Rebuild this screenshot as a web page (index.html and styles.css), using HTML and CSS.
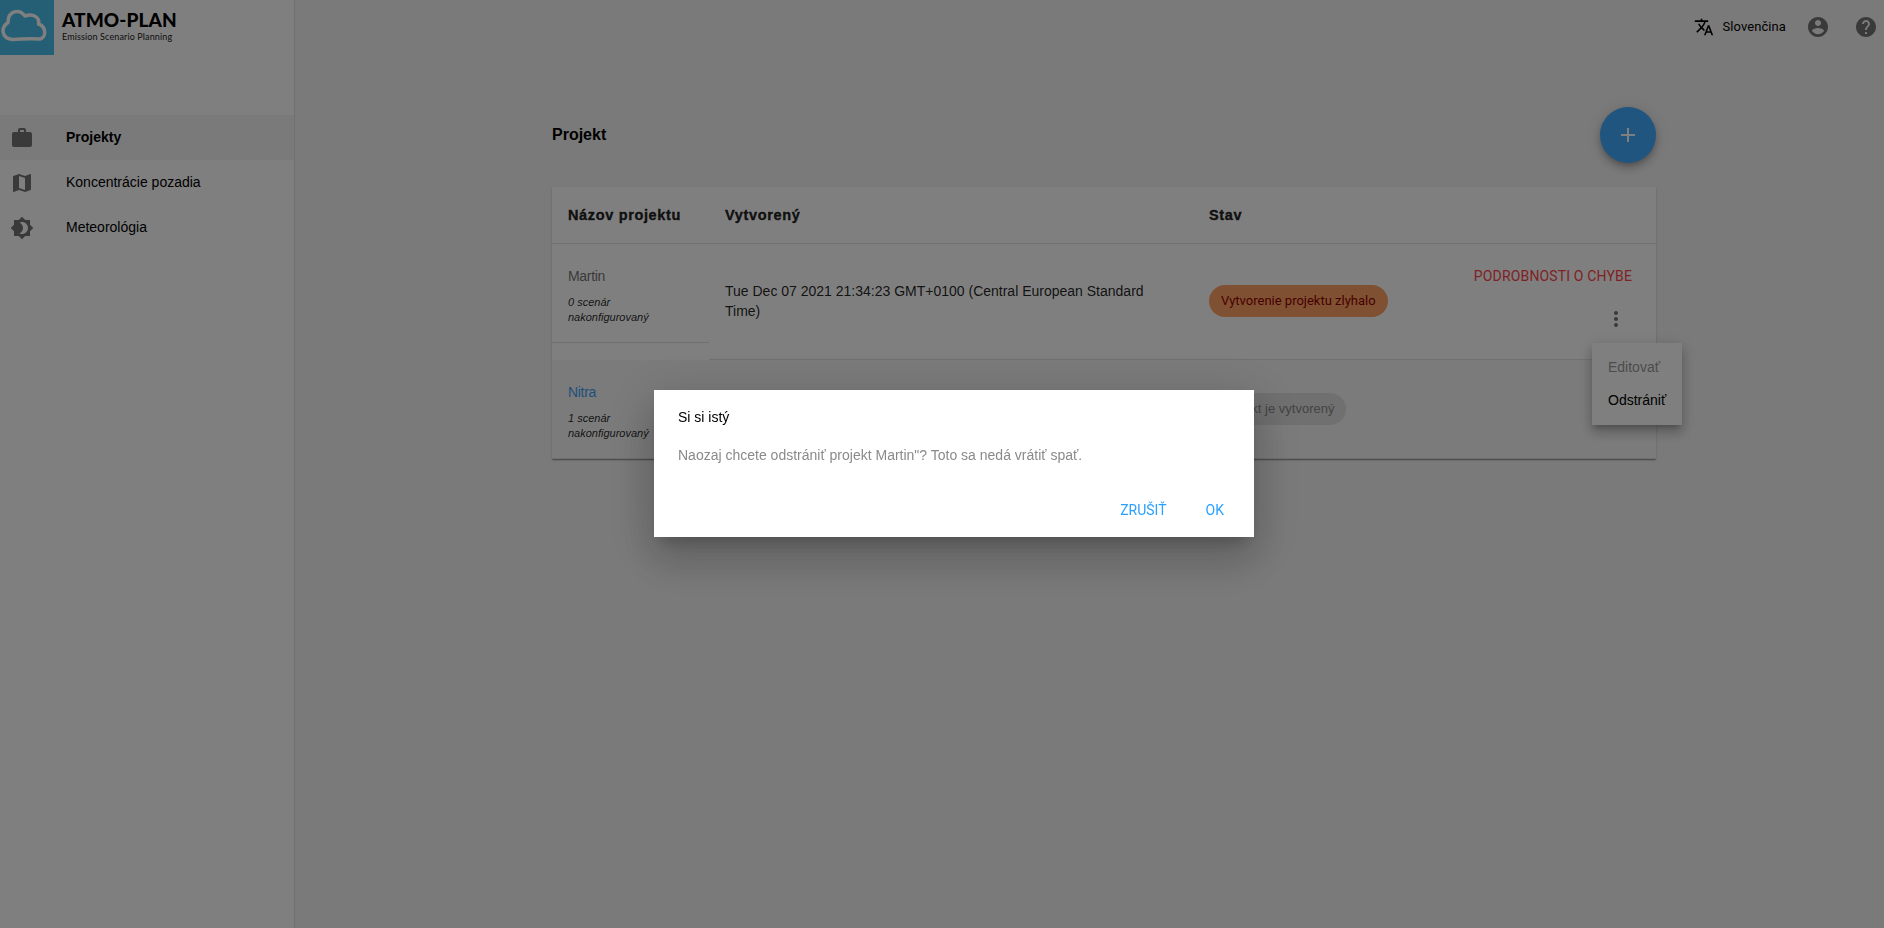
FILE: index.html
```html
<!DOCTYPE html>
<html lang="sk">
<head>
<meta charset="utf-8">
<title>ATMO-PLAN</title>
<link rel="stylesheet" href="styles.css">
</head>
<body>
<div class="app">
  <aside class="sidebar">
    <div class="brand">
      <svg class="brand-mark" viewBox="0 0 54 55"><rect width="54" height="55" fill="#48bfec"/><path d="M12 39.500C2 38.500 0 28 8 22.500C8 11 19 8 25 16C34 13 40 18 38.500 24C47 27 46 38 40 39Q26 38.500 12 39.500Z" fill="none" stroke="#fff" stroke-width="3.500" stroke-linejoin="round"/></svg>
      <div class="brand-text"><div class="brand-name">ATMO-PLAN</div><div class="brand-sub">Emission Scenario Planning</div></div>
    </div>
    <nav class="nav">
      <a class="nav-item active"><svg class="icon" viewBox="0 0 24 24"><path d="M20 6h-4V4c0-1.110-.89-2-2-2h-4c-1.110 0-2 .89-2 2v2H4c-1.110 0-2 .89-2 2v11c0 1.110.89 2 2 2h16c1.110 0 2-.89 2-2V8c0-1.110-.89-2-2-2zm-6 0h-4V4h4v2z"/></svg><span class="nav-label">Projekty</span></a>
      <a class="nav-item"><svg class="icon" viewBox="0 0 24 24"><path d="M20.500 3l-.16.03L15 5.100 9 3 3.360 4.900c-.21.07-.36.25-.36.48V20.500c0 .28.22.5.5.5l.16-.03L9 18.900l6 2.100 5.640-1.900c.21-.07.36-.25.36-.48V3.500c0-.28-.22-.5-.5-.5zM15 19l-6-2.110V5l6 2.110V19z"/></svg><span class="nav-label">Koncentrácie pozadia</span></a>
      <a class="nav-item"><svg class="icon" viewBox="0 0 24 24"><path d="M20 8.690V4h-4.690L12 .69 8.690 4H4v4.690L.69 12 4 15.310V20h4.690L12 23.310 15.310 20H20v-4.690L23.310 12 20 8.690zM12 18c-.89 0-1.740-.2-2.500-.55C11.560 16.500 13 14.420 13 12s-1.440-4.500-3.500-5.450C10.260 6.200 11.110 6 12 6c3.310 0 6 2.690 6 6s-2.690 6-6 6z"/></svg><span class="nav-label">Meteorológia</span></a>
    </nav>
  </aside>
  <main class="main">
    <header class="topbar">
      <span class="language"><svg class="lang-icon" viewBox="0 0 24 24"><path d="M12.870 15.070l-2.540-2.510.03-.03c1.740-1.940 2.980-4.170 3.710-6.530H17V4h-7V2H8v2H1v1.990h11.170C11.500 7.920 10.440 9.750 9 11.350 8.070 10.320 7.300 9.190 6.690 8h-2c.73 1.630 1.730 3.170 2.980 4.560l-5.090 5.020L4 19l5-5 3.110 3.110.76-2.040zM18.500 10h-2L12 22h2l1.120-3h4.750L21 22h2l-4.500-12zm-2.620 7l1.620-4.330L19.120 17h-3.240z"/></svg>Slovenčina</span>
      <svg class="icon" viewBox="0 0 24 24"><path d="M12 2C6.480 2 2 6.480 2 12s4.480 10 10 10 10-4.480 10-10S17.520 2 12 2zm0 3c1.660 0 3 1.340 3 3s-1.340 3-3 3-3-1.340-3-3 1.340-3 3-3zm0 14.200c-2.500 0-4.710-1.280-6-3.220.03-1.990 4-3.080 6-3.080 1.990 0 5.970 1.090 6 3.080-1.290 1.940-3.500 3.220-6 3.220z"/></svg>
      <svg class="icon" viewBox="0 0 24 24"><path d="M12 2C6.480 2 2 6.480 2 12s4.480 10 10 10 10-4.480 10-10S17.520 2 12 2zm1 17h-2v-2h2v2zm2.070-7.750l-.9.92C13.450 12.900 13 13.500 13 15h-2v-.5c0-1.100.45-2.100 1.170-2.830l1.240-1.260c.37-.36.59-.86.59-1.410 0-1.100-.9-2-2-2s-2 .9-2 2H8c0-2.210 1.790-4 4-4s4 1.790 4 4c0 .88-.36 1.680-.93 2.250z"/></svg>
    </header>
    <section class="content">
      <div class="heading">
        <h1 class="title">Projekt</h1>
        <button class="fab"><svg class="icon-plus" viewBox="0 0 24 24"><path d="M19 13h-6v6h-2v-6H5v-2h6V5h2v6h6z"/></svg></button>
      </div>
      <div class="table">
        <div class="row head"><div>Názov projektu</div><div>Vytvorený</div><div>Stav</div><div></div></div>
        <div class="row">
          <div class="name-cell"><div class="name muted">Martin</div><div class="scenarios">0 scenár<br>nakonfigurovaný</div></div>
          <div class="cell created">Tue Dec 07 2021 21:34:23 GMT+0100 (Central European Standard Time)</div>
          <div class="cell"><span class="chip failed">Vytvorenie projektu zlyhalo</span></div>
          <div class="cell actions"><span class="details">PODROBNOSTI O CHYBE</span><svg class="icon more" viewBox="0 0 24 24"><path d="M12 8c1.100 0 2-.9 2-2s-.9-2-2-2-2 .9-2 2 .9 2 2 2zm0 2c-1.100 0-2 .9-2 2s.9 2 2 2 2-.9 2-2-.9-2-2-2zm0 6c-1.100 0-2 .9-2 2s.9 2 2 2 2-.9 2-2-.9-2-2-2z"/></svg></div>
        </div>
        <div class="row last">
          <div class="name-cell"><div class="name link">Nitra</div><div class="scenarios">1 scenár<br>nakonfigurovaný</div></div>
          <div class="cell"></div>
          <div class="cell"><span class="chip">Projekt je vytvorený</span></div>
          <div class="cell"></div>
        </div>
      </div>
    </section>
  </main>
</div>
<div class="menu"><div class="menu-item disabled">Editovať</div><div class="menu-item">Odstrániť</div></div>
<div class="backdrop">
  <div class="dialog">
    <h2 class="dialog-title">Si si istý</h2>
    <p class="dialog-text">Naozaj chcete odstrániť projekt Martin"? Toto sa nedá vrátiť spať.</p>
    <div class="dialog-actions"><button class="text-button">ZRUŠIŤ</button><button class="text-button">OK</button></div>
  </div>
</div>
</body>
</html>
```
FILE: styles.css
```css
* { box-sizing: border-box; }
body { margin: 0; font: 14px/20px "Liberation Sans", Arial, sans-serif; color: #000; background: #f5f5f5; overflow: hidden; }
button { font: inherit; border: 0; padding: 0; background: none; }
.icon { width: 24px; height: 24px; fill: #757575; flex: none; }

.app { display: flex; height: 100vh; }
.sidebar { width: 295px; flex: none; background: #fff; border-right: 1px solid #e0e0e0; }
.brand { display: flex; height: 115px; }
.brand-mark { width: 54px; height: 55px; flex: none; }
.brand-text { padding: 9px 0 0 8px; white-space: nowrap; }
.brand-name { font: 900 19px/21px Lato, sans-serif; letter-spacing: .1px; }
.brand-sub { font: 9px/12px Lato, sans-serif; padding-top: 1px; color: #222; letter-spacing: .12px; }
.nav-item { display: flex; align-items: center; height: 45px; padding-left: 10px; gap: 32px; }
.nav-item.active { background: #f5f5f5; font-weight: bold; }
.nav-label { padding-bottom: 2px; }

.main { flex: 1; }
.topbar { display: flex; justify-content: flex-end; align-items: center; height: 54px; padding-right: 6px; gap: 24px; }
.language { display: flex; align-items: center; font: 13px/20px Roboto, sans-serif; letter-spacing: .08px; gap: 8px; margin-right: -4px; }
.lang-icon { width: 20px; height: 20px; }
.content { width: 1104px; margin: 53px 0 0 257px; }
.heading { display: flex; justify-content: space-between; align-items: center; height: 56px; }
.title { margin: 0; font-size: 16px; font-weight: bold; }
.fab { display: grid; place-items: center; width: 56px; height: 56px; border-radius: 50%; background: #40aaff; box-shadow: 0 3px 5px -1px rgba(0,0,0,.2), 0 6px 10px rgba(0,0,0,.14), 0 1px 18px rgba(0,0,0,.12); }
.icon-plus { width: 24px; height: 24px; fill: #fff; }

.table { margin-top: 24px; background: #fff; box-shadow: 0 2px 1px -1px rgba(0,0,0,.2), 0 1px 1px rgba(0,0,0,.14), 0 1px 3px rgba(0,0,0,.12); }
.row { display: grid; grid-template-columns: 157px 484px 233px 230px; height: 116px; color: rgba(0,0,0,.87); }
.head { height: 57px; align-items: center; font-size: 14.5px; font-weight: bold; border-bottom: 1px solid #e0e0e0; }
.head div { padding-left: 16px; letter-spacing: .65px; -webkit-text-stroke: .4px; }
.name-cell { height: 99px; padding: 22px 0 0 16px; border-bottom: 1px solid #e0e0e0; }
.name { height: 20px; letter-spacing: -.3px; }
.muted { color: #757575; }
.link { color: #40a0f5; }
.scenarios { margin-top: 9px; font-size: 11px; line-height: 15px; font-style: italic; }
.cell { display: flex; align-items: center; padding: 0 16px 2px; border-bottom: 1px solid #e0e0e0; }
.created { padding-right: 40px; }
.last { height: 99px; background: #f7f7f7; }
.last .cell { padding-bottom: 0; }
.chip { height: 32px; padding: 0 12px; border-radius: 16px; background: #e0e0e0; color: #888; font-size: 13px; line-height: 32px; white-space: nowrap; }
.failed { background: #ffa365; color: #8f0000; font-family: Roboto, sans-serif; }
.actions { flex-direction: column; align-items: flex-end; justify-content: flex-start; padding: 22px 24px 0 0; }
.details { color: #ff4448; font-family: Roboto, sans-serif; letter-spacing: .15px; }
.more { margin: 21px 4px 0 0; }

.menu { position: absolute; left: 1592px; top: 343px; width: 90px; height: 82px; padding: 8px 0; background: #fff; box-shadow: 0 5px 5px -3px rgba(0,0,0,.2), 0 8px 10px 1px rgba(0,0,0,.14), 0 3px 14px 2px rgba(0,0,0,.12); }
.menu-item { height: 33px; line-height: 33px; padding-left: 16px; }
.disabled { color: #999; }

.backdrop { position: fixed; inset: 0; display: flex; align-items: center; justify-content: center; padding: 0 0 1px 24px; background: rgba(0,0,0,.5); }
.dialog { width: 600px; height: 147px; padding: 17px 24px 0; background: #fff; box-shadow: 0 11px 15px -7px rgba(0,0,0,.2), 0 24px 38px 3px rgba(0,0,0,.14), 0 9px 46px 8px rgba(0,0,0,.12); }
.dialog-title { margin: 0; font-size: 14px; font-weight: normal; }
.dialog-text { margin: 18px 0 0; color: #8a8a8a; }
.dialog-actions { display: flex; justify-content: flex-end; gap: 39px; margin-top: 35px; padding-right: 6px; }
.text-button { color: #2aa0ff; font-family: Roboto, sans-serif; }
```
